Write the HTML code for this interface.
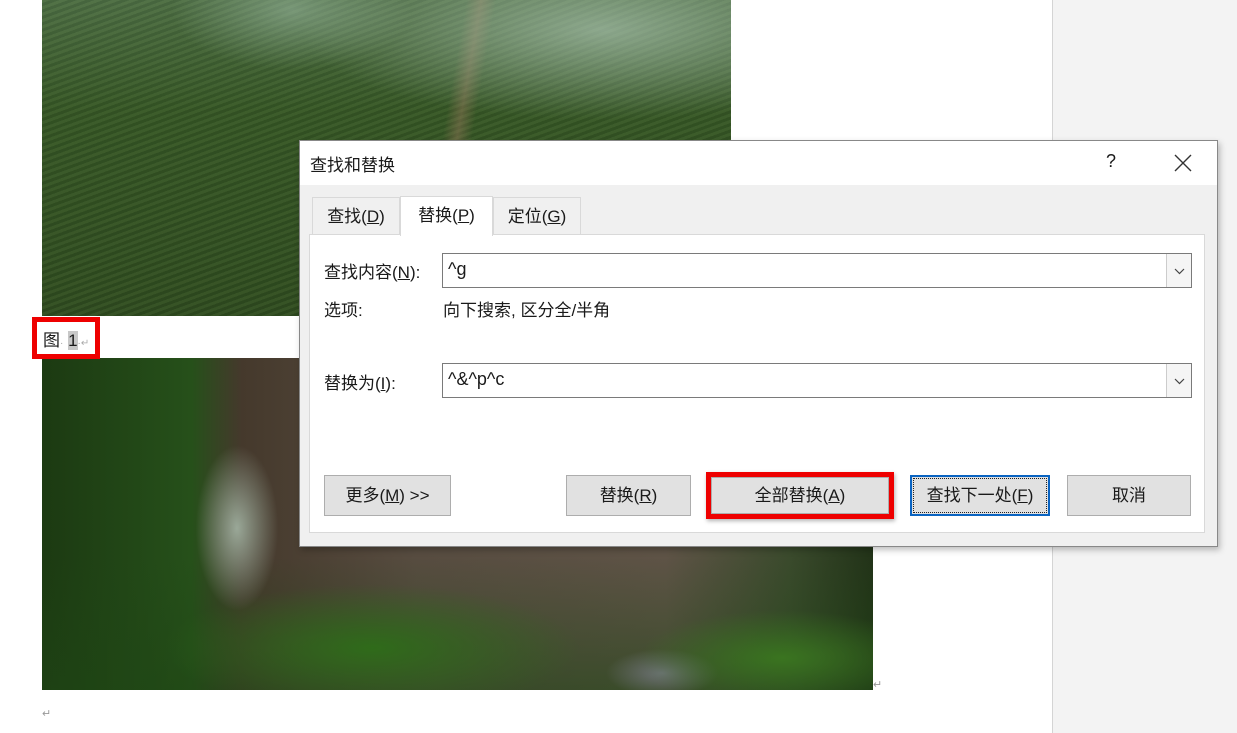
<!DOCTYPE html>
<html><head><meta charset="utf-8"><style>
*{margin:0;padding:0;box-sizing:border-box}
body{width:1237px;height:733px;background:#fff;position:relative;overflow:hidden;font-family:"Liberation Sans","Noto Sans CJK SC",sans-serif;font-size:17px;color:#1a1a1a}
.abs{position:absolute}
.side{left:1052px;top:0;width:185px;height:733px;background:#f3f3f3;border-left:1px solid #d4d4d4}
.img1{left:42px;top:0;width:689px;height:316px;background:
radial-gradient(ellipse 300px 90px at 560px 30px,rgba(170,195,175,.7),transparent),
radial-gradient(ellipse 120px 60px at 250px 10px,rgba(150,180,155,.6),transparent),
linear-gradient(100deg,transparent 57%,rgba(150,120,90,.45) 59%,transparent 61%),
repeating-linear-gradient(160deg,rgba(63,95,44,.6) 0 3px,rgba(44,74,30,.6) 3px 6px),
linear-gradient(180deg,#6f8f70,#3a5a2a 35%,#2a401c)}
.img2{left:42px;top:358px;width:831px;height:332px;background:
radial-gradient(ellipse 55px 110px at 195px 170px,#9aa898,transparent 75%),
radial-gradient(ellipse 260px 80px at 330px 290px,#2f6b1a,transparent 80%),
radial-gradient(ellipse 180px 60px at 740px 300px,#3a7420,transparent 80%),
radial-gradient(ellipse 70px 30px at 620px 315px,#6d7275,transparent 80%),
linear-gradient(180deg,transparent 60%,rgba(30,70,20,.55) 100%),
linear-gradient(90deg,#1c3a12 0,#26501a 18%,#45392c 24%,#574c40 45%,#5e5346 75%,#3a4a2c 90%,#223318 100%)}
.cap{left:32px;top:317px;width:68px;height:42px;border:5px solid #e00;background:#fff}
.dlg{left:299px;top:140px;width:919px;height:407px;background:#f0f0f0;border:1px solid #888;box-shadow:2px 3px 6px rgba(0,0,0,.25)}
.title{left:0;top:0;width:917px;height:44px;background:#fff}
.tab{height:38px;border:1px solid #d9d9d9;border-bottom:none;background:#f0f0f0;text-align:center;line-height:38px}
.panel{left:9px;top:93px;width:896px;height:299px;background:#fff;border:1px solid #d9d9d9}
.inp{height:35px;border:1px solid #7a7a7a;background:#fff;font-size:18px;padding-left:5px;line-height:31px}
.dd{position:absolute;right:0;top:0;width:25px;height:33px;border-left:1px solid #ccc;background:#f5f5f5}
.btn{height:41px;background:#e1e1e1;border:1px solid #adadad;text-align:center;line-height:39px}
u{text-decoration:underline}
</style></head><body>
<div class="abs side"></div>
<div class="abs img1"></div>
<div class="abs img2"></div>
<div class="abs cap"></div>
<div class="abs" style="left:43px;top:326px;font-size:17px">图<span style="color:#aaa;font-size:10px">·</span> <span style="background:#c8c8c8">1</span><span style="color:#aaa;font-size:10px">·↵</span></div>
<div class="abs" style="left:873px;top:678px;color:#999;font-size:11px">↵</div>
<div class="abs" style="left:42px;top:707px;color:#999;font-size:11px">↵</div>
<div class="abs dlg">
 <div class="abs title"></div>
 <div class="abs" style="left:10px;top:10px;font-size:17px">查找和替换</div>
 <div class="abs" style="left:806px;top:10px;font-size:18px">?</div>
 <svg class="abs" style="left:874px;top:13px" width="18" height="18"><path d="M1 1L17 17M17 1L1 17" stroke="#333" stroke-width="1.4"/></svg>
 <div class="abs tab" style="left:12px;top:56px;width:88px"> 查找(<u>D</u>)</div>
 <div class="abs tab" style="left:193px;top:56px;width:88px">定位(<u>G</u>)</div>
 <div class="abs panel"></div>
 <div class="abs tab" style="left:100px;top:55px;width:93px;height:40px;background:#fff">替换(<u>P</u>)</div>
 <div class="abs" style="left:24px;top:117px">查找内容(<u>N</u>):</div>
 <div class="abs inp" style="left:142px;top:112px;width:750px">^g<div class="dd"><svg width="25" height="33"><path d="M8 15l4.5 4.5L17 15" fill="none" stroke="#444" stroke-width="1.2"/></svg></div></div>
 <div class="abs" style="left:24px;top:155px">选项:</div>
 <div class="abs" style="left:143px;top:155px">向下搜索, 区分全/半角</div>
 <div class="abs" style="left:24px;top:228px">替换为(<u>I</u>):</div>
 <div class="abs inp" style="left:142px;top:222px;width:750px">^&amp;^p^c<div class="dd"><svg width="25" height="33"><path d="M8 15l4.5 4.5L17 15" fill="none" stroke="#444" stroke-width="1.2"/></svg></div></div>
 <div class="abs btn" style="left:24px;top:334px;width:127px">更多(<u>M</u>) &gt;&gt;</div>
 <div class="abs btn" style="left:266px;top:334px;width:125px">替换(<u>R</u>)</div>
 <div class="abs" style="left:406px;top:331px;width:188px;height:47px;border:5px solid #e00;box-shadow:1px 2px 4px rgba(0,0,0,.3)"></div>
 <div class="abs btn" style="left:411px;top:336px;width:178px;height:37px;line-height:35px">全部替换(<u>A</u>)</div>
 <div class="abs btn" style="left:610px;top:334px;width:140px;border:2px solid #0a64c2;line-height:37px"><div style="position:absolute;inset:1px;border:1px dotted #222"></div>查找下一处(<u>F</u>)</div>
 <div class="abs btn" style="left:767px;top:334px;width:124px">取消</div>
</div>
</body></html>
